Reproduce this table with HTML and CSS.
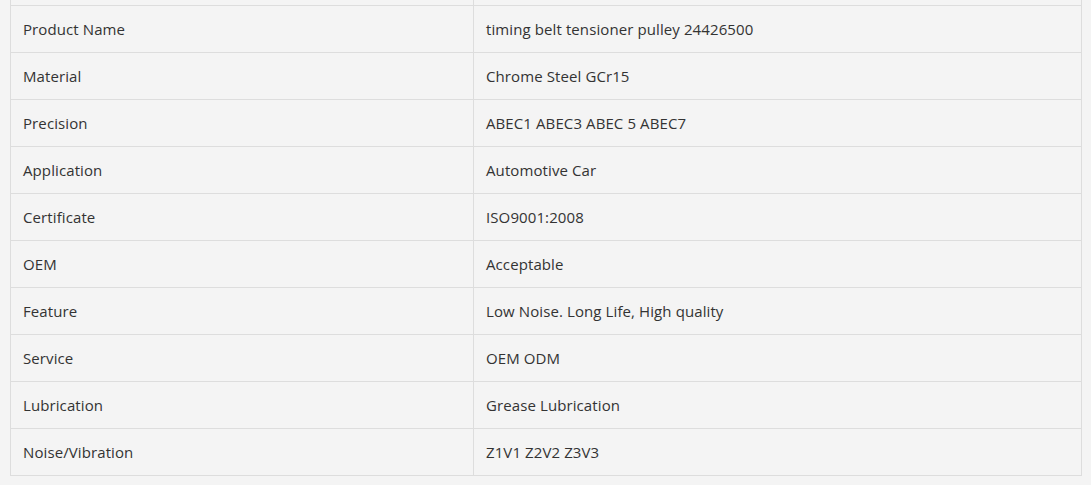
FILE: index.html
```html
<!DOCTYPE html>
<html>
<head>
<meta charset="utf-8">
<link rel="stylesheet" href="styles.css">
</head>
<body>
<div class="wrap">
<table class="spec">
<tbody>
<tr class="cut"><td></td><td></td></tr>
<tr><td>Product Name</td><td>timing belt tensioner pulley 24426500</td></tr>
<tr><td>Material</td><td>Chrome Steel GCr15</td></tr>
<tr><td>Precision</td><td>ABEC1 ABEC3 ABEC 5 ABEC7</td></tr>
<tr><td>Application</td><td>Automotive Car</td></tr>
<tr><td>Certificate</td><td>ISO9001:2008</td></tr>
<tr><td>OEM</td><td>Acceptable</td></tr>
<tr><td>Feature</td><td>Low Noise. Long Life, High quality</td></tr>
<tr><td>Service</td><td>OEM ODM</td></tr>
<tr><td>Lubrication</td><td>Grease Lubrication</td></tr>
<tr><td>Noise/Vibration</td><td>Z1V1 Z2V2 Z3V3</td></tr>
</tbody>
</table>
</div>
</body>
</html>
```
FILE: styles.css
```css
html, body {
  margin: 0;
  padding: 0;
  background: #f4f4f4;
}
.wrap {
  margin: -42px 9px 0 10px;
}
.spec {
  width: 100%;
  border-collapse: collapse;
  table-layout: fixed;
  font-family: "Open Sans", "Noto Sans", sans-serif;
  font-size: 15px;
  letter-spacing: 0.1px;
  color: #333;
}
.spec td {
  border: 1px solid #dddddd;
  height: 47px;
  padding: 1px 12px 0;
  box-sizing: border-box;
  vertical-align: middle;
}
.spec td:first-child {
  width: 463px;
}
.spec tr:first-child td {
  border-top: none;
}
```
